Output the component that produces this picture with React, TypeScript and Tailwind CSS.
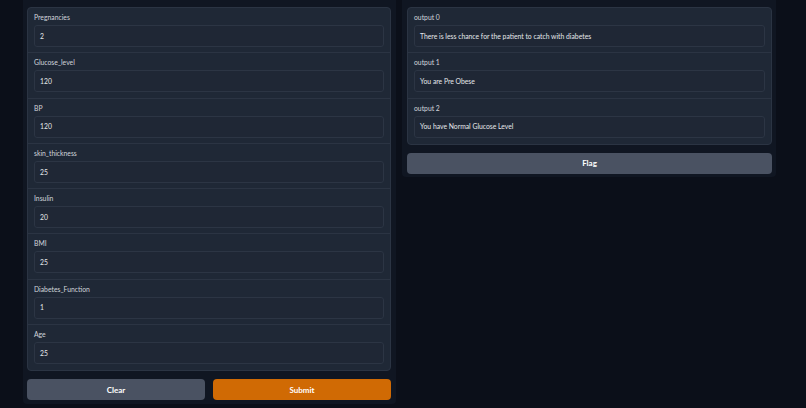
const inputs = [
  { label: 'Pregnancies', value: '2' },
  { label: 'Glucose_level', value: '120' },
  { label: 'BP', value: '120' },
  { label: 'skin_thickness', value: '25' },
  { label: 'Insulin', value: '20' },
  { label: 'BMI', value: '25' },
  { label: 'Diabetes_Function', value: '1' },
  { label: 'Age', value: '25' },
]

const outputs = [
  { label: 'output 0', value: 'There is less chance for the patient to catch with diabetes' },
  { label: 'output 1', value: 'You are Pre Obese' },
  { label: 'output 2', value: 'You have Normal Glucose Level' },
]

function Field({ label, value, last }: { label: string; value: string; last?: boolean }) {
  return (
    <div className={`h-[45.25px] px-[6px] pt-[5px] ${last ? '' : 'border-b border-[#2b3443]'}`}>
      <p className="h-[12px] leading-[8px] text-[6.8px] text-[#d1d5db]">{label}</p>
      <div className="h-[22px] flex items-center px-[5px] rounded-[3px] border border-[#2c3544] bg-[#1f2735] text-[6.8px] text-[#e5e7eb]">
        {value}
      </div>
    </div>
  )
}

export default function App() {
  return (
    <div className="min-h-screen bg-[#0b0f19] flex items-start gap-[6px] pl-[23px] font-['Lato',sans-serif]">
      {/* inputs */}
      <div className="w-[373px] bg-[#101622] pl-[4px] pr-[5px] pt-[7px] pb-[4px] rounded-b-[4px]">
        <div className="rounded-[4px] border border-[#2b3443] bg-[#1f2836] overflow-hidden">
          {inputs.map((f, i) => (
            <Field key={f.label} {...f} last={i === inputs.length - 1} />
          ))}
        </div>
        <div className="flex gap-[8px] mt-[8px]">
          <button className="flex-1 h-[21px] rounded-[4px] bg-[#4a5262] text-[8px] font-bold text-white">Clear</button>
          <button className="flex-1 h-[21px] rounded-[4px] bg-[#d06a04] text-[8px] font-bold text-white">Submit</button>
        </div>
      </div>

      {/* outputs */}
      <div className="w-[374px] bg-[#101622] pl-[5px] pr-[4px] pt-[7px] pb-[3px] rounded-b-[4px]">
        <div className="rounded-[4px] border border-[#2b3443] bg-[#1f2836] overflow-hidden">
          {outputs.map((f, i) => (
            <Field key={f.label} {...f} last={i === outputs.length - 1} />
          ))}
        </div>
        <button className="w-full h-[21px] mt-[8px] rounded-[4px] bg-[#4a5262] text-[8px] font-bold text-white">Flag</button>
      </div>
    </div>
  )
}
